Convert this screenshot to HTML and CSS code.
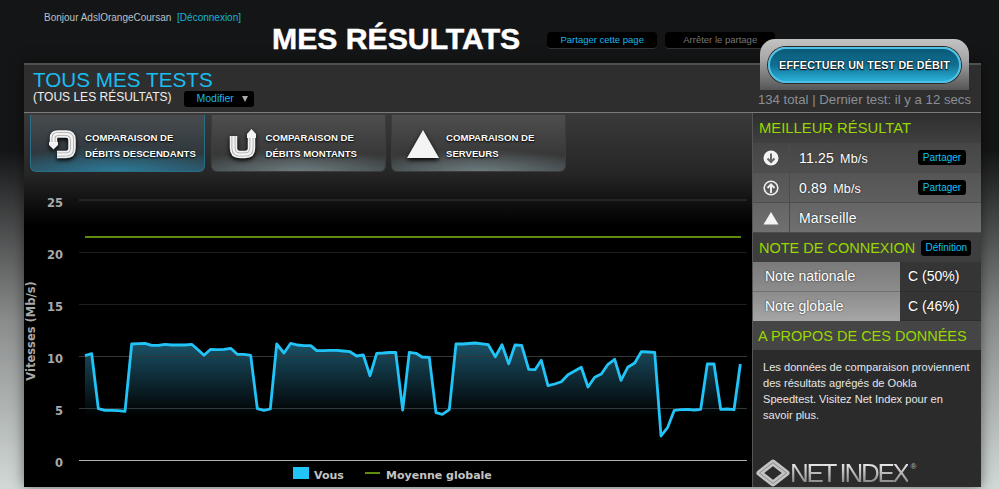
FILE: index.html
```html
<!DOCTYPE html>
<html lang="fr">
<head>
    <meta charset="UTF-8">
    <title>Mes résultats</title>
    <link rel="stylesheet" href="styles.css">
</head>
<body>
    <header class="top">
        <div class="greeting">Bonjour AdslOrangeCoursan <a class="logout">[Déconnexion]</a></div>
        <h1 class="title">MES RÉSULTATS</h1>
        <div class="share-pills">
            <span class="pill pill-on">Partager cette page</span>
            <span class="pill pill-off">Arrêter le partage</span>
        </div>
    </header>

    <!-- bouton par dessus le panneau -->
    <div class="test-tab">
        <div class="test-btn">EFFECTUER UN TEST DE DÉBIT</div>
    </div>

    <main class="panel">
        <div class="panel-head">
            <div>
                <h2 class="tests-title">TOUS MES TESTS</h2>
                <div class="tests-sub">
                    <span>(TOUS LES RÉSULTATS)</span>
                    <span class="modify">Modifier <i class="caret"></i></span>
                </div>
            </div>
            <div class="totals">134 total | Dernier test: il y a 12 secs</div>
        </div>

        <div class="panel-body">
            <section class="results">
                <nav class="tabs">
                    <div class="tab tab-active">
                        <svg class="tab-icon" viewBox="0 0 30 32">
                            <path class="icon-thick" d="M5.5 15V10Q5.5 6 10 6H18Q24 6 24 12V20Q24 26.5 18 26.5H9"/>
                            <path class="icon-mid" d="M5.5 15V10Q5.5 6 10 6H18Q24 6 24 12V20Q24 26.5 18 26.5H9"/>
                            <path class="icon-thin" d="M5.5 15V10Q5.5 6 10 6H18Q24 6 24 12V20Q24 26.5 18 26.5H9"/>
                            <path class="icon-fill" d="M1 14H10V17L5.5 21.5L1 17Z"/>
                        </svg>
                        <span>COMPARAISON DE<br>DÉBITS DESCENDANTS</span>
                    </div>
                    <div class="tab">
                        <svg class="tab-icon" viewBox="0 0 30 32">
                            <path class="icon-thick" d="M4.5 8V20Q4.5 26.5 11 26.5H16Q22.5 26.5 22.5 20V9"/>
                            <path class="icon-mid" d="M4.5 8V20Q4.5 26.5 11 26.5H16Q22.5 26.5 22.5 20V9"/>
                            <path class="icon-thin" d="M4.5 8V20Q4.5 26.5 11 26.5H16Q22.5 26.5 22.5 20V9"/>
                            <path class="icon-fill" d="M18 10V6L22.5 1L27 6V10Z"/>
                        </svg>
                        <span>COMPARAISON DE<br>DÉBITS MONTANTS</span>
                    </div>
                    <div class="tab tab-server">
                        <svg class="tab-icon tab-icon-wide" viewBox="0 0 34 32">
                            <path class="icon-fill" d="M17 2L33 30H1Z"/>
                        </svg>
                        <span>COMPARAISON DE<br>SERVEURS</span>
                    </div>
                </nav>

                <svg class="chart" viewBox="24 172 728 315">
                    <defs>
                        <linearGradient id="areaFade" x1="0" y1="0" x2="0" y2="1">
                            <stop offset="0" stop-color="#1b5166"/>
                            <stop offset="1" stop-color="#1b5166" stop-opacity="0"/>
                        </linearGradient>
                    </defs>

                    <g class="grid">
                        <line x1="79" x2="747" y1="200" y2="200"/>
                        <line x1="79" x2="747" y1="252.5" y2="252.5"/>
                        <line x1="79" x2="747" y1="304.5" y2="304.5"/>
                    </g>
                    <line class="axis" x1="79" x2="747" y1="460.5" y2="460.5"/>

                    <g class="y-labels">
                        <text x="63" y="207">25</text>
                        <text x="63" y="259">20</text>
                        <text x="63" y="311">15</text>
                        <text x="63" y="363">10</text>
                        <text x="63" y="415">5</text>
                        <text x="63" y="467">0</text>
                    </g>
                    <text class="y-title" transform="translate(35 331) rotate(-90)">Vitesses (Mb/s)</text>

                    <line class="avg" x1="85" x2="741" y1="237" y2="237"/>

                    <polygon class="area" points="85,417 85,355.7 91.7,353.7 98.3,408.7 105,410.3 111.7,410.3 118.3,410.7 125,411.3 131.7,344 138.3,343.7 145,343.3 151.7,345.3 158.3,345.3 165,344.3 171.7,345 178.3,345 185,345 191.7,344.3 198.3,350 204,355.3 210.7,349.3 217.3,349.7 224,349.3 230.7,348.3 237.3,354.3 244,354.3 250.7,355.3 257.3,408.7 264,410.3 270.3,409 276.7,344 284,353 290.7,343.3 297.3,345 304,345.7 310.7,345.7 316.7,350.7 323.3,350.7 330,350.3 336.7,350.3 343.3,351 350,351.7 356.7,356 363.3,355 370,375.7 376.7,353.3 383.3,353 389.5,352.5 395.7,352.3 402.7,410 409.3,352.3 416,353.3 422,357 429.3,357.3 436,412.7 442.3,414.3 449.3,409.7 456,344 462.7,344 475,343 488.3,344.7 495.3,356.7 502,344.7 508.7,363.7 515,345 521.7,345.3 528.7,369.3 535,369.7 541.3,360.3 548,385.7 554.7,384 561.3,381.7 568,374.7 581.3,367.3 588,387 594.7,377.3 601.3,374 608,364.3 614.7,359.3 621,380.3 627.7,367.3 634.7,363 641.3,351.7 648,352 654.7,352.3 661,417 674.3,417 681,409.7 687.7,409.3 694.3,410 700.7,409.3 707.3,364 714,364 720.7,409.3 727.3,409 734,409.7 740.3,364 740.3,417"/>
                    <g class="grid-low">
                        <line x1="79" x2="747" y1="356.5" y2="356.5"/>
                        <line x1="79" x2="747" y1="408.5" y2="408.5"/>
                    </g>
                    <polyline class="speed" points="85,355.7 91.7,353.7 98.3,408.7 105,410.3 111.7,410.3 118.3,410.7 125,411.3 131.7,344 138.3,343.7 145,343.3 151.7,345.3 158.3,345.3 165,344.3 171.7,345 178.3,345 185,345 191.7,344.3 198.3,350 204,355.3 210.7,349.3 217.3,349.7 224,349.3 230.7,348.3 237.3,354.3 244,354.3 250.7,355.3 257.3,408.7 264,410.3 270.3,409 276.7,344 284,353 290.7,343.3 297.3,345 304,345.7 310.7,345.7 316.7,350.7 323.3,350.7 330,350.3 336.7,350.3 343.3,351 350,351.7 356.7,356 363.3,355 370,375.7 376.7,353.3 383.3,353 389.5,352.5 395.7,352.3 402.7,410 409.3,352.3 416,353.3 422,357 429.3,357.3 436,412.7 442.3,414.3 449.3,409.7 456,344 462.7,344 475,343 488.3,344.7 495.3,356.7 502,344.7 508.7,363.7 515,345 521.7,345.3 528.7,369.3 535,369.7 541.3,360.3 548,385.7 554.7,384 561.3,381.7 568,374.7 581.3,367.3 588,387 594.7,377.3 601.3,374 608,364.3 614.7,359.3 621,380.3 627.7,367.3 634.7,363 641.3,351.7 648,352 654.7,352.3 661,436 667.7,427.3 674.3,410.3 681,409.7 687.7,409.3 694.3,410 700.7,409.3 707.3,364 714,364 720.7,409.3 727.3,409 734,409.7 740.3,364"/>

                    <rect class="legend-box" x="293" y="467" width="16" height="12"/>
                    <text class="legend" x="314" y="479">Vous</text>
                    <line class="avg" x1="365" x2="380" y1="473" y2="473"/>
                    <text class="legend" x="386" y="479">Moyenne globale</text>
                </svg>
            </section>

            <aside class="sidebar">
                <h3 class="side-head">MEILLEUR RÉSULTAT</h3>
                <div class="best-row">
                    <div class="best-icon">
                        <svg class="small-icon" viewBox="0 0 16 16">
                            <circle class="icon-fill" cx="8" cy="8" r="7.5"/>
                            <path class="arrow-dark" d="M8 3.5V12M4.5 8.5L8 12L11.5 8.5"/>
                        </svg>
                    </div>
                    <div class="best-val">11.25 <small>Mb/s</small></div>
                    <span class="mini-btn">Partager</span>
                </div>
                <div class="best-row">
                    <div class="best-icon">
                        <svg class="small-icon" viewBox="0 0 16 16">
                            <circle class="ring" cx="8" cy="8" r="6.8"/>
                            <path class="arrow-light" d="M8 13V4.5M4.5 8L8 4.5L11.5 8"/>
                        </svg>
                    </div>
                    <div class="best-val">0.89 <small>Mb/s</small></div>
                    <span class="mini-btn">Partager</span>
                </div>
                <div class="best-row">
                    <div class="best-icon">
                        <svg class="small-icon" viewBox="0 0 16 16">
                            <path class="icon-fill" d="M8 2L15.5 14.5H0.5Z"/>
                        </svg>
                    </div>
                    <div class="best-val">Marseille</div>
                </div>

                <h3 class="side-head side-head-note"><span>NOTE DE CONNEXION</span> <span class="mini-btn">Définition</span></h3>
                <div class="note-row">
                    <div class="note-name">Note nationale</div>
                    <div class="note-val">C (50%)</div>
                </div>
                <div class="note-row note-row-last">
                    <div class="note-name">Note globale</div>
                    <div class="note-val">C (46%)</div>
                </div>

                <h3 class="side-head side-head-about">A PROPOS DE CES DONNÉES</h3>
                <div class="about">
                    <p>Les données de comparaison proviennent<br>des résultats agrégés de Ookla<br>Speedtest. Visitez Net Index pour en<br>savoir plus.</p>
                    <div class="net-index">
                        <svg class="net-logo" viewBox="0 0 34 28">
                            <path class="logo-outer" d="M17 3.5L30.5 14L17 24.5L3.5 14Z"/>
                            <path class="logo-stripe" d="M17 3.5L30.5 14L17 24.5L3.5 14Z"/>
                        </svg>
                        <span class="net-text">NET INDEX</span><sup class="net-reg">®</sup>
                    </div>
                </div>
            </aside>
        </div>
    </main>
</body>
</html>
```

FILE: styles.css
```css
* {
    margin: 0;
    padding: 0;
    box-sizing: border-box;
}

body {
    position: relative;
    height: 489px;
    overflow: hidden;
    font-family: 'Liberation Sans', Arial, sans-serif;
    color: #ffffff;
    background: linear-gradient(180deg, #141516 0, #141516 150px, #8a8c8c 320px, #d2dad7 489px);
}

/* Haut de page */
.top {
    height: 63px;
    padding-left: 44px;
    display: flex;
    align-items: flex-start;
}

.greeting {
    width: 228px;
    padding-top: 12px;
    font-size: 10px;
    color: #b9c0c6;
}

.logout {
    margin-left: 3px;
    color: #14b4d8;
}

.title {
    padding-top: 21px;
    font-size: 30.2px;
    line-height: 36px;
    font-weight: 700;
    color: #ffffff;
    -webkit-text-stroke: 0.5px #ffffff;
}

.share-pills {
    margin: 32px 0 0 27px;
    display: flex;
    gap: 8px;
}

.pill {
    width: 110px;
    height: 17px;
    line-height: 16px;
    text-align: center;
    font-size: 9.5px;
    background: #000000;
    border-radius: 4px;
    border-bottom: 1px solid #333;
}

.pill-on { color: #1db8ea; }
.pill-off { color: #777; }

/* Bouton de test */
.test-tab {
    position: absolute;
    left: 760px;
    top: 39px;
    width: 209px;
    height: 51px;
    padding: 8px 8px 0;
    border-radius: 15px 15px 0 0;
    background: linear-gradient(180deg, #c4c4c4 0%, #a6a6a6 40%, #555555 100%);
}

.test-btn {
    height: 36px;
    line-height: 32px;
    text-align: center;
    font-size: 10.7px;
    font-weight: 700;
    letter-spacing: 0.2px;
    border-radius: 18px;
    border: 2px solid #4fc1e6;
    box-shadow: 0 0 0 1px #2a2a2a;
    text-shadow: 0 1px 1px #000, 0 0 2px #000;
    background: linear-gradient(180deg, #0a5a78 0%, #0f6f92 50%, #2ab0d8 100%);
}

/* Panneau */
.panel {
    margin-left: 24px;
    width: 957px;
    height: 424px;
    display: flex;
    flex-direction: column;
    box-shadow: 0 0 12px rgba(0, 0, 0, 0.5);
}

.panel-head {
    height: 50px;
    padding: 6px 10px 0 9px;
    display: flex;
    justify-content: space-between;
    background: #2e2e2e;
    border-top: 2px solid #505050;
    border-bottom: 1px solid #7b7b7b;
}

.tests-title {
    font-size: 20.7px;
    line-height: 18px;
    font-weight: 400;
    color: #19bdf0;
}

.tests-sub {
    display: flex;
    align-items: flex-start;
    gap: 13px;
    margin-top: 1px;
    font-size: 12px;
    line-height: 15px;
    color: #eeeeee;
}

.modify {
    width: 70px;
    height: 16px;
    line-height: 15px;
    padding-left: 12px;
    margin-top: 1px;
    font-size: 10.5px;
    color: #1db8ea;
    background: #000000;
    border-radius: 3px;
}

.caret {
    display: inline-block;
    margin-left: 5px;
    border-left: 3px solid transparent;
    border-right: 3px solid transparent;
    border-top: 6px solid #aaa;
}

.totals {
    padding-top: 21px;
    font-size: 13.2px;
    color: #8a8f95;
}

.panel-body {
    flex: 1;
    display: flex;
    min-height: 0;
}

/* Colonne graphique */
.results {
    width: 728px;
    display: flex;
    flex-direction: column;
    background: linear-gradient(180deg, #3a3a3a 0, #262626 60px, #000000 112px);
}

.tabs {
    height: 59px;
    padding: 2px 0 0 6px;
    display: flex;
    gap: 5.5px;
}

.tab {
    width: 175px;
    height: 57px;
    padding: 6px 0 0 17px;
    display: flex;
    align-items: center;
    gap: 7px;
    font-size: 9.6px;
    line-height: 16px;
    font-weight: 700;
    text-shadow: 0 1px 2px #000, 0 0 1px #000;
    border-radius: 0 0 6px 6px;
    border: 1px solid #3c3c3c;
    border-top: 0;
    background:
        radial-gradient(ellipse 60% 40% at 50% 100%, rgba(140, 160, 165, 0.55), transparent),
        linear-gradient(180deg, #4e4e4e 0%, #383838 70%, #454c4f 100%);
}

.tab-server {
    padding-left: 14px;
    gap: 6px;
}

.tab-active {
    border-color: #2a6d86;
    background:
        radial-gradient(ellipse 70% 45% at 50% 100%, rgba(45, 150, 190, 0.6), transparent),
        linear-gradient(180deg, #474b4e 0%, #2f383d 70%, #2b4c5b 100%);
}

.tab-icon {
    width: 30px;
    height: 32px;
    flex-shrink: 0;
    margin-top: -4px;
    filter: drop-shadow(0 2px 2px #000);
}

.tab-icon-wide {
    width: 34px;
}

.icon-thick {
    fill: none;
    stroke: #f2f2f2;
    stroke-width: 7.5;
}

.icon-mid {
    fill: none;
    stroke: #a8a8a8;
    stroke-width: 4;
}

.icon-thin {
    fill: none;
    stroke: #f2f2f2;
    stroke-width: 2.4;
}

.icon-fill {
    fill: #f4f4f4;
}

.chart {
    width: 728px;
    height: 315px;
    display: block;
}

.grid line {
    stroke: #1e1e1e;
    stroke-width: 1;
}

.grid line:first-child {
    stroke: #2c2c2c;
    stroke-width: 1.5;
}

.grid-low line {
    stroke: #33393b;
    stroke-width: 1;
}

.axis {
    stroke: #b0b0b0;
    stroke-width: 1;
}

.avg {
    stroke: #5f8c0e;
    stroke-width: 2;
}

.y-labels text {
    font-family: 'DejaVu Sans', sans-serif;
    font-size: 11.5px;
    font-weight: 700;
    fill: #a8a8a8;
    text-anchor: end;
}

.y-title {
    font-family: 'DejaVu Sans', sans-serif;
    font-size: 11.5px;
    font-weight: 700;
    fill: #a8a8a8;
    text-anchor: middle;
}

.area {
    fill: url(#areaFade);
}

.speed {
    fill: none;
    stroke: #22c4f8;
    stroke-width: 2.8;
    stroke-linejoin: round;
}

.legend-box {
    fill: #22c4f8;
}

.legend {
    font-family: 'DejaVu Sans', sans-serif;
    font-size: 11px;
    font-weight: 700;
    fill: #c4c4c4;
}

/* Colonne droite */
.sidebar {
    width: 229px;
    border-left: 1px solid #555;
    display: flex;
    flex-direction: column;
    background: #2b2b2b;
}

.side-head {
    height: 30px;
    padding-left: 6px;
    line-height: 30px;
    font-size: 14.8px;
    font-weight: 400;
    white-space: nowrap;
    color: #98d800;
    background: linear-gradient(180deg, #2e2e2e, #404040);
}

.best-row {
    height: 30px;
    display: flex;
    align-items: center;
    font-size: 14px;
    text-shadow: 0 0 2px #222;
    border-bottom: 1px solid #4c4c4c;
}

.best-row:nth-of-type(1) { background: linear-gradient(180deg, #464646, #4e4e4e); }
.best-row:nth-of-type(2) { background: linear-gradient(180deg, #555555, #5e5e5e); }
.best-row:nth-of-type(3) { background: linear-gradient(180deg, #656565, #707070); }

.best-icon {
    width: 37px;
    height: 100%;
    display: flex;
    align-items: center;
    justify-content: center;
    border-right: 1px solid #4c4c4c;
}

.small-icon {
    width: 16px;
    height: 16px;
}

.arrow-dark,
.arrow-light {
    fill: none;
    stroke-width: 2;
}

.arrow-dark { stroke: #666; }
.arrow-light { stroke: #eeeeee; }

.ring {
    fill: none;
    stroke: #eeeeee;
    stroke-width: 1.6;
}

.best-val {
    flex: 1;
    padding-left: 9px;
    letter-spacing: 0.2px;
}

.best-val small {
    margin-left: 2px;
    font-size: 12.5px;
}

.mini-btn {
    display: inline-block;
    width: 48px;
    height: 15px;
    margin-right: 15px;
    line-height: 15px;
    text-align: center;
    font-size: 10px;
    font-weight: 400;
    color: #12c0f5;
    background: #000000;
    border-radius: 3px;
    text-shadow: none;
}

.side-head-note {
    height: 29px;
    display: flex;
    align-items: center;
    gap: 6px;
    font-size: 14.5px;
    background: #3e3e3e;
}

.side-head-note .mini-btn {
    width: 50px;
    height: 16px;
    margin: 0;
}

.note-row {
    height: 30px;
    display: flex;
    font-size: 14px;
    line-height: 29px;
    text-shadow: 0 0 2px #222;
}

.note-row-last {
    height: 29px;
}

.note-name {
    width: 147px;
    padding-left: 12px;
    border-bottom: 1px solid #707070;
    background: linear-gradient(180deg, #7a7a7a, #8c8c8c);
}

.note-row-last .note-name {
    border-bottom: 0;
    background: linear-gradient(180deg, #8c8c8c, #a6a6a6);
}

.note-val {
    flex: 1;
    padding-left: 8px;
    background: #353535;
    border-bottom: 1px solid #2e2e2e;
}

.side-head-about {
    height: 29px;
    padding-left: 5px;
    font-size: 14.5px;
    background: #454545;
}

.about {
    flex: 1;
    display: flex;
    flex-direction: column;
    justify-content: space-between;
    padding: 9px 0 0 10px;
    background: #2b2b2b;
}

.about p {
    font-size: 11.1px;
    line-height: 16px;
    white-space: nowrap;
    color: #e6e6e6;
}

.net-index {
    margin-left: -7px;
    display: flex;
    align-items: center;
    gap: 0;
}

.net-logo {
    width: 34px;
    height: 28px;
    flex-shrink: 0;
}

.logo-outer {
    fill: #2b2b2b;
    stroke: #c4c4c4;
    stroke-width: 6;
    stroke-linejoin: round;
}

.logo-stripe {
    fill: none;
    stroke: #8a8a8a;
    stroke-width: 1;
    stroke-linejoin: round;
}

.net-text {
    font-size: 26px;
    line-height: 28px;
    letter-spacing: -2.3px;
    color: transparent;
    background: linear-gradient(180deg, #e4e4e4 20%, #8f8f8f 80%);
    -webkit-background-clip: text;
    background-clip: text;
}

.net-reg {
    font-size: 8px;
    line-height: 8px;
    margin: -12px 0 0 3px;
    color: #bcbcbc;
}
```
